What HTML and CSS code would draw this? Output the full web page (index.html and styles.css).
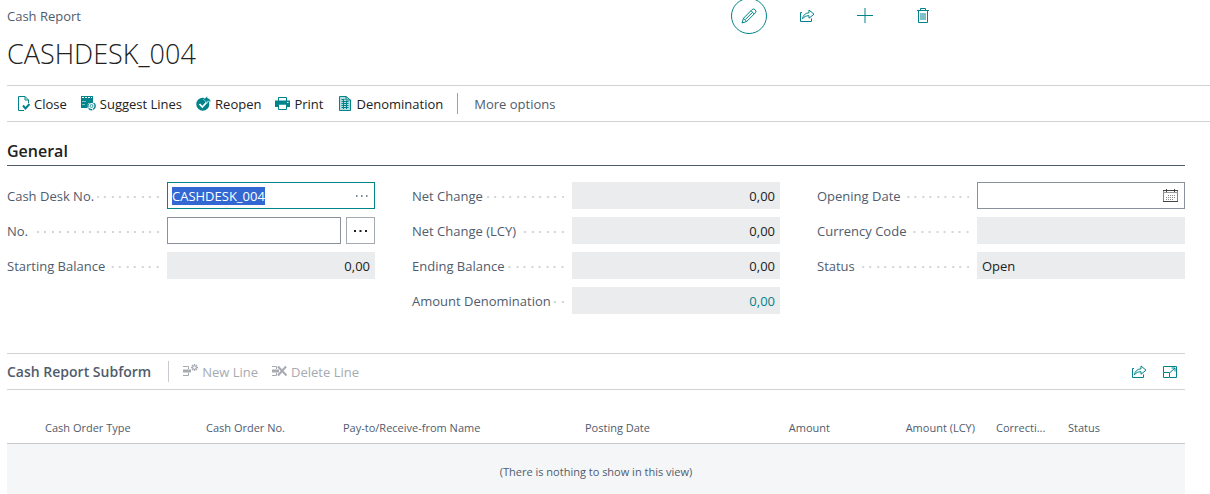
FILE: index.html
```html
<!DOCTYPE html>
<html lang="en">
<head>
<meta charset="utf-8">
<title>Cash Report - CASHDESK_004</title>
<link rel="stylesheet" href="styles.css">
</head>
<body>
<svg class="sprite" aria-hidden="true">
  <symbol id="share" viewBox="0 0 16 16">
    <path d="M3 4.500H1.500V13.500H12.500V10.500" fill="none" stroke="currentColor"/>
    <path d="M3.500 10.800C4 7.500 6 5 10 4.800V2L15 6.200L10 10.200V7.700C7 7.700 5 8.700 3.500 10.800Z" fill="none" stroke="currentColor" stroke-linejoin="round"/>
  </symbol>
</svg>
<div class="page">
  <header class="header">
    <div class="crumb">Cash Report</div>
    <div class="header-actions">
      <button class="round active" aria-label="Edit"><svg class="icon16" viewBox="0 0 16 16"><path d="M1 15L2.500 10.200L11.200 1.500Q12.800 .2 14.200 1.800Q15.700 3.300 14.400 4.800L5.700 13.500ZM2.500 10.200L5.700 13.500M10 2.700L13.200 6M4.500 11.300L11.600 4.300" fill="none" stroke="currentColor"/></svg></button>
      <button class="round" aria-label="Share"><svg class="icon16"><use href="#share"/></svg></button>
      <button class="round" aria-label="New"><svg class="icon16" viewBox="0 0 16 16"><path d="M8 0V15M0 7.500H16" fill="none" stroke="currentColor"/></svg></button>
      <button class="round" aria-label="Delete"><svg class="icon16" viewBox="0 0 16 16"><path d="M2 2.500H14M5.500 2.500V.5H10.500V2.500M3.500 3V14.500H12.500V3" fill="none" stroke="currentColor"/><path d="M6 5V12M8 5V12M10 5V12" stroke="currentColor"/></svg></button>
    </div>
  </header>
  <h1 class="title">CASHDESK_004</h1>

  <nav class="toolbar">
    <button class="command"><svg class="icon" viewBox="0 0 15 15"><path d="M13.500 7V4L10 .5H3.500V14.500H9M10 .5V4H13.500" fill="none" stroke="currentColor"/><path d="M8 9.500L10.500 12.500L14.500 8" fill="none" stroke="currentColor" stroke-width="2"/></svg>Close</button>
    <button class="command"><svg class="icon" viewBox="0 0 15 15"><path d="M0 0H12V6H9L6 9V12H0Z" fill="currentColor"/><path d="M1 1.500H11" stroke="#fff" stroke-dasharray="2 1"/><path d="M1 5.500H5M1 8.500H4" stroke="#fff" stroke-width=".5"/><circle cx="10.500" cy="10" r="3.700" fill="#fff" stroke="currentColor" stroke-width="1.400" stroke-dasharray="4 .8"/><circle cx="10.500" cy="10" r="1.500" fill="none" stroke="currentColor" stroke-width=".8"/></svg>Suggest Lines</button>
    <button class="command"><svg class="icon" viewBox="0 0 15 15"><circle cx="6.800" cy="8.200" r="6.500" fill="currentColor"/><path d="M3.500 8L6.300 11L10.500 6.500" fill="none" stroke="#fff" stroke-width="1.800"/><path d="M7.500 3.500L11.500 0V2Q15 2.300 14.500 6.500Q13.300 5 11.500 5V7Z" fill="currentColor" stroke="#fff" stroke-width=".5"/></svg>Reopen</button>
    <button class="command"><svg class="icon" viewBox="0 0 15 15"><path d="M0 5H15V11H12V9H3V11H0Z" fill="currentColor"/><path d="M3.500 5V1.500H11.500V5M3.500 8.500V13.500H11.500V8.500" fill="#fff" stroke="currentColor"/><path d="M0 4.500H15V8.500H0Z" fill="currentColor"/><path d="M5 10.500H10M12 6.500H13.500" stroke="#fff"/></svg>Print</button>
    <button class="command"><svg class="icon" viewBox="0 0 15 15"><path d="M2.500 .5H9L13.500 4V14.500H2.500Z" fill="#b5dcde" stroke="currentColor"/><path d="M9 .5V4H13.500M4.500 3.500H7.500M4.500 5.500H11.500M4.500 7.500H11.500M4.500 9.500H11.500M4.500 11.500H11.500M6.500 3V13M9.500 5V13" fill="none" stroke="currentColor"/></svg>Denomination</button>
    <span class="divider dark"></span>
    <button class="command more">More options</button>
  </nav>

  <main class="content">
    <section>
      <h2 class="section-title">General</h2>
      <div class="form">
        <div class="column">
          <div class="field"><label class="label" for="desk">Cash Desk No.</label>
            <div class="box focused"><input class="value" id="desk" value="CASHDESK_004"><button class="assist" aria-label="Look up cash desk"><svg class="icon" viewBox="0 0 15 15"><path d="M3 8H4.500M8 8H9.500M13 8H14.500" stroke="currentColor" stroke-width="1.500"/></svg></button></div></div>
          <div class="field"><label class="label" for="no">No.</label>
            <div class="pair"><div class="box"><input class="value" id="no"></div><button class="box lookup" aria-label="Assist edit"><svg class="icon" viewBox="0 0 15 15"><path d="M1 8H3M6.500 8H8.500M12 8H14" stroke="currentColor" stroke-width="2"/></svg></button></div></div>
          <div class="field"><label class="label" for="start">Starting Balance</label>
            <div class="box readonly"><input class="value number" id="start" value="0,00" readonly></div></div>
        </div>
        <div class="column">
          <div class="field"><label class="label" for="net">Net Change</label>
            <div class="box readonly"><input class="value number" id="net" value="0,00" readonly></div></div>
          <div class="field"><label class="label" for="netlcy">Net Change (LCY)</label>
            <div class="box readonly"><input class="value number" id="netlcy" value="0,00" readonly></div></div>
          <div class="field"><label class="label" for="end">Ending Balance</label>
            <div class="box readonly"><input class="value number" id="end" value="0,00" readonly></div></div>
          <div class="field"><label class="label" for="denom">Amount Denomination</label>
            <div class="box readonly"><input class="value number drill" id="denom" value="0,00" readonly></div></div>
        </div>
        <div class="column">
          <div class="field"><label class="label" for="date">Opening Date</label>
            <div class="box"><input class="value" id="date"><button class="assist dark-icon" aria-label="Pick a date"><svg class="icon" viewBox="0 0 15 15"><path d="M.5 3V13.500H14.500V3" fill="none" stroke="#8a8580"/><path d="M0 2.500H15M0 13.500H15" stroke="currentColor"/><path d="M0 4.500H15" stroke="#999"/><path d="M3.500 1V4M11.500 1V4" stroke="currentColor"/><path d="M5 7.500H13M3 9.500H13M3 11.500H11" stroke="#888" stroke-dasharray="1 1"/></svg></button></div></div>
          <div class="field"><label class="label" for="currency">Currency Code</label>
            <div class="box readonly"><input class="value" id="currency" readonly></div></div>
          <div class="field"><label class="label" for="status">Status</label>
            <div class="box readonly"><input class="value" id="status" value="Open" readonly></div></div>
        </div>
      </div>
    </section>

    <section class="subform">
      <div class="subbar">
        <h2 class="sub-title">Cash Report Subform</h2>
        <span class="divider"></span>
        <button class="command" disabled><svg class="icon" viewBox="0 0 15 15"><path d="M0 2.500H5.500V5M0 11.500H5.500V9" fill="none" stroke="currentColor"/><path d="M0 7H8" stroke="currentColor" stroke-width="3"/><path d="M11.500 0V7M8 3.500H15M9 1L14 6M14 1L9 6" stroke="currentColor" stroke-width="1.300"/><circle cx="11.500" cy="3.500" r="1.200" fill="#fff"/></svg>New Line</button>
        <button class="command" disabled><svg class="icon" viewBox="0 0 15 15"><path d="M0 2.500H4.500V5M0 11.500H4.500V9" fill="none" stroke="currentColor"/><path d="M0 7H7" stroke="currentColor" stroke-width="3"/><path d="M6 2.500L14.500 11.500M14 2.500L6 11.500" stroke="currentColor" stroke-width="2"/></svg>Delete Line</button>
        <div class="sub-actions">
          <button class="plain" aria-label="Share"><svg class="icon16"><use href="#share"/></svg></button>
          <button class="plain" aria-label="Expand"><svg class="icon16" viewBox="0 0 16 16"><path d="M1.500 8V2.500H14.500V13.500H8M1.500 8.500H7.500V13.500H1.500ZM8 8.500L13 4M9.500 4H13V7.500" fill="none" stroke="currentColor"/></svg></button>
        </div>
      </div>
      <table class="grid">
        <colgroup><col class="c-mark"><col class="c-type"><col class="c-no"><col class="c-name"><col class="c-date"><col class="c-amount"><col class="c-lcy"><col class="c-corr"><col></colgroup>
        <thead><tr><td></td><th>Cash Order Type</th><th>Cash Order No.</th><th>Pay-to/Receive-from Name</th><th>Posting Date</th><th class="right">Amount</th><th class="right">Amount (LCY)</th><th>Correcti...</th><th>Status</th></tr></thead>
        <tbody><tr><td class="empty" colspan="9">(There is nothing to show in this view)</td></tr></tbody>
      </table>
    </section>
  </main>
</div>
<script src="script.js"></script>
</body>
</html>
```

FILE: styles.css
```css
* { box-sizing: border-box; }

body {
  margin: 0;
  background: #fff;
  color: #212121;
  font: 13px/18px "Open Sans", "Noto Sans", sans-serif;
  overflow: hidden;
}

button {
  margin: 0;
  padding: 0;
  border: 0;
  background: none;
  color: inherit;
  font: inherit;
}

.sprite { position: absolute; width: 0; height: 0; }
.icon { width: 15px; height: 15px; flex: none; display: block; }
.icon16 { width: 16px; height: 16px; display: block; }

.page { padding-left: 7px; }

/* The round buttons run slightly past the top edge of the window. */
.header {
  display: grid;
  grid-template-columns: 3fr 2fr;
  margin-top: -2px;
}
.crumb { color: #505c6d; line-height: 36px; }
.header-actions { display: flex; gap: 22px; padding-left: 2px; }
.round {
  width: 36px;
  height: 36px;
  border-radius: 50%;
  display: grid;
  place-items: center;
  color: #00838a;
}
.round.active { border: 1px solid #00838a; }

.title {
  margin: 0;
  padding: 2px 0 13px;
  font-size: 27px;
  line-height: 36px;
  font-weight: 300;
}

.toolbar {
  display: flex;
  align-items: center;
  gap: 14px;
  height: 37px;
  padding-left: 8px;
  border-top: 1px solid #d0d2d5;
  border-bottom: 1px solid #d0d2d5;
}
.command {
  display: flex;
  align-items: center;
  gap: 4px;
  white-space: nowrap;
}
.command .icon { color: #00838a; }
.command.more { color: #505c6d; padding-left: 2px; }
.command:disabled, .command:disabled .icon { color: #a6aab1; }
.divider { width: 1px; height: 21px; background: #c8cbd0; }
.divider.dark { background: #9aa1ad; }

.content { padding-right: 25px; }

.section-title {
  margin: 0;
  padding: 19px 0 4px;
  border-bottom: 1px solid #505c6d;
  font-size: 16px;
  line-height: 20px;
  font-weight: 600;
}

.form {
  display: grid;
  grid-template-columns: repeat(3, 1fr);
  gap: 37px;
  padding-top: 16px;
}
.column { display: flex; flex-direction: column; gap: 8px; }
.field {
  display: grid;
  grid-template-columns: 160px 1fr;
  height: 27px;
}
.label {
  display: flex;
  align-items: center;
  gap: 3px;
  padding-right: 8px;
  color: #505c6d;
  white-space: nowrap;
}
.label::after {
  content: "";
  flex: 1;
  height: 2px;
  margin-top: 2px;
  background: linear-gradient(90deg, transparent 5px, #d3d5d8 5px, #d3d5d8 7px, transparent 7px, transparent 13px, #d3d5d8 13px) right top / 15px 2px repeat-x;
}

.box {
  display: flex;
  align-items: center;
  flex: 1;
  min-width: 0;
  border: 1px solid #8a909c;
  background: #fff;
}
.box.focused { border-color: #00838a; }
.box.readonly { border-color: #ebecee; background: #ebecee; }
.pair { display: flex; gap: 5px; }
.box.lookup { flex: 0 0 29px; justify-content: center; border-color: #a5a9b0; }
.value {
  flex: 1;
  min-width: 0;
  margin: 0;
  padding: 0 4px;
  border: 0;
  outline: 0;
  background: none;
  color: #212121;
  caret-color: transparent;
  font: inherit;
}
.value::selection { background: #3367d1; color: #fff; }
.number { text-align: right; }
.drill { color: #00838a; }
.assist { padding: 0 6px; color: #505c6d; }
.dark-icon { color: #444; }

.subform { padding-top: 39px; }
.subbar {
  display: flex;
  align-items: center;
  gap: 14px;
  height: 37px;
  border-top: 1px solid #d0d2d5;
  border-bottom: 1px solid #d0d2d5;
}
.sub-title {
  margin: 0;
  padding-right: 3px;
  color: #505c6d;
  font-size: 14px;
  line-height: 20px;
  font-weight: 600;
}
.sub-actions { display: flex; gap: 15px; margin-left: auto; padding-right: 7px; color: #00838a; }

.grid {
  width: 100%;
  table-layout: fixed;
  border-collapse: collapse;
  font-size: 11px;
  color: #505c6d;
}
.grid th {
  height: 53px;
  padding: 23px 8px 0 13px;
  border-bottom: 1px solid #c8cacd;
  font-weight: 400;
  text-align: left;
  white-space: nowrap;
}
.grid thead td { border-bottom: 1px solid #c8cacd; }
.grid .right { text-align: right; }
.grid .empty {
  height: 57px;
  padding: 0;
  background: #f5f6f8;
  text-align: center;
}
.c-mark { width: 25px; }
.c-type { width: 161px; }
.c-no { width: 137px; }
.c-name { width: 242px; }
.c-date { width: 136px; }
.c-amount { width: 130px; }
.c-lcy { width: 145px; }
.c-corr { width: 72px; }
```

FILE: script.js
```js
const desk = document.getElementById("desk");
desk.focus();
desk.select();
```
